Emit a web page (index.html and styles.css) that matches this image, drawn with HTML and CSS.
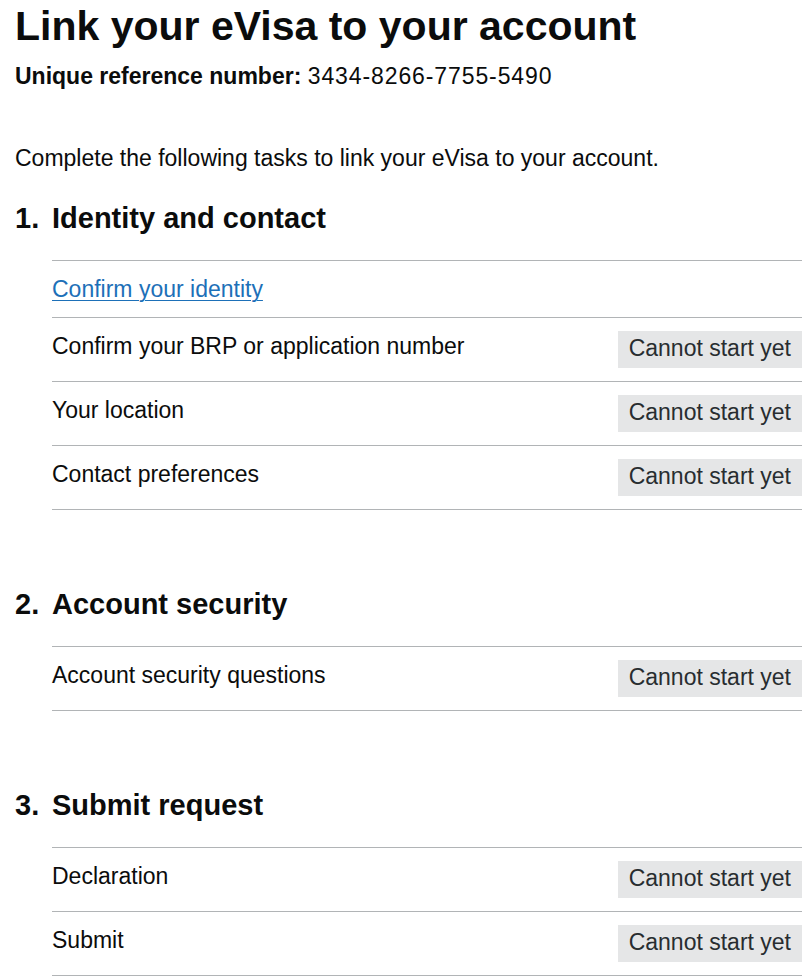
FILE: index.html
```html
<!DOCTYPE html>
<html lang="en">

<head>
  <meta charset="UTF-8" />
  <meta name="viewport" content="width=device-width, initial-scale=1.0" />
  <title>Link your eVisa to your account</title>
  <link rel="stylesheet" href="styles.css">
</head>

<body>
  <main class="page">
    <h1>Link your eVisa to your account</h1>
    <p class="urn"><strong>Unique reference number:</strong> <span class="urn-value">3434-8266-7755-5490</span></p>

    <p class="intro">Complete the following tasks to link your eVisa to your account.</p>

    <section class="task-section">
      <h2><span class="task-number">1.</span>Identity and contact</h2>
      <ul class="task-list">
        <li class="task">
          <a href="#" class="task-name">Confirm your identity</a>
        </li>
        <li class="task">
          <span class="task-name">Confirm your BRP or application number</span>
          <strong class="tag">Cannot start yet</strong>
        </li>
        <li class="task">
          <span class="task-name">Your location</span>
          <strong class="tag">Cannot start yet</strong>
        </li>
        <li class="task">
          <span class="task-name">Contact preferences</span>
          <strong class="tag">Cannot start yet</strong>
        </li>
      </ul>
    </section>

    <section class="task-section">
      <h2><span class="task-number">2.</span>Account security</h2>
      <ul class="task-list">
        <li class="task">
          <span class="task-name">Account security questions</span>
          <strong class="tag">Cannot start yet</strong>
        </li>
      </ul>
    </section>

    <section class="task-section">
      <h2><span class="task-number">3.</span>Submit request</h2>
      <ul class="task-list">
        <li class="task">
          <span class="task-name">Declaration</span>
          <strong class="tag">Cannot start yet</strong>
        </li>
        <li class="task">
          <span class="task-name">Submit</span>
          <strong class="tag">Cannot start yet</strong>
        </li>
      </ul>
    </section>
  </main>
</body>

</html>
```
FILE: styles.css
```css
body {
  margin: 0;
  background: #fff;
  color: #0b0c0c;
  font-family: 'Liberation Sans', Arial, sans-serif;
}

.page {
  padding: 1px 10px 0 15px;
}

h1 {
  font-size: 41px;
  line-height: 50px;
  font-weight: 700;
  margin: 0 0 10px;
}

.urn {
  font-size: 23px;
  line-height: 30px;
  margin: 0 0 52px;
}

.urn-value {
  letter-spacing: 0.9px;
}

.intro {
  font-size: 23px;
  line-height: 30px;
  margin: 0 0 28px;
}

.task-section {
  margin-bottom: 77px;
}

.task-section:last-child {
  margin-bottom: 0;
}

.task-section h2 {
  font-size: 29px;
  line-height: 35px;
  font-weight: 700;
  margin: 0 0 24px;
}

.task-number {
  display: inline-block;
  width: 37px;
}

.task-list {
  list-style: none;
  margin: 0 0 0 37px;
  padding: 0;
  border-top: 1px solid #b1b4b6;
}

.task {
  display: flex;
  justify-content: space-between;
  align-items: flex-start;
  padding: 13px 0;
  border-bottom: 1px solid #b1b4b6;
  font-size: 23px;
  line-height: 30px;
}

.task-name {
  color: #0b0c0c;
}

a.task-name {
  color: #1d70b8;
  text-decoration: underline;
  text-decoration-thickness: 1px;
  text-underline-offset: 3px;
}

.tag {
  font-weight: 400;
  color: #282d30;
  background: #e5e6e7;
  padding: 2px 11px 5px;
}
```
